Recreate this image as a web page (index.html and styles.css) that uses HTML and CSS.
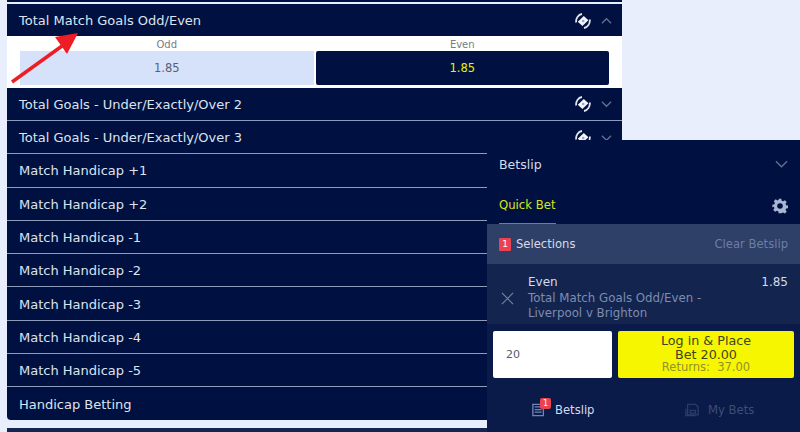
FILE: index.html
```html
<!DOCTYPE html>
<html lang="en">
<head>
  <meta charset="UTF-8">
  <title>Match markets</title>
  <link rel="stylesheet" href="styles.css">
</head>
<body>

  <div class="markets">
    <div class="market-top"></div>

    <div class="market">
      <span>Total Match Goals Odd/Even</span>
      <svg class="swap" viewBox="0 0 16 16"><use href="#swap-icon"/></svg>
      <svg class="chev" viewBox="0 0 12 8"><path d="M1 6.5 6 1.5 11 6.5"/></svg>
    </div>
    <div class="market-body">
      <div class="odd">
        <div class="odd-label">Odd</div>
        <div class="odd-btn">1.85</div>
      </div>
      <div class="odd">
        <div class="odd-label">Even</div>
        <div class="odd-btn selected">1.85</div>
      </div>
    </div>

    <div class="market">
      <span>Total Goals - Under/Exactly/Over 2</span>
      <svg class="swap" viewBox="0 0 16 16"><use href="#swap-icon"/></svg>
      <svg class="chev" viewBox="0 0 12 8"><path d="M1 1.5 6 6.5 11 1.5"/></svg>
    </div>
    <div class="market">
      <span>Total Goals - Under/Exactly/Over 3</span>
      <svg class="swap" viewBox="0 0 16 16"><use href="#swap-icon"/></svg>
      <svg class="chev" viewBox="0 0 12 8"><path d="M1 1.5 6 6.5 11 1.5"/></svg>
    </div>
    <div class="market"><span>Match Handicap +1</span></div>
    <div class="market"><span>Match Handicap +2</span></div>
    <div class="market"><span>Match Handicap -1</span></div>
    <div class="market"><span>Match Handicap -2</span></div>
    <div class="market"><span>Match Handicap -3</span></div>
    <div class="market"><span>Match Handicap -4</span></div>
    <div class="market"><span>Match Handicap -5</span></div>
    <div class="market last"><span>Handicap Betting</span></div>
    <div class="market-next"></div>
  </div>

  <!-- red arrow drawn over the page -->
  <svg class="arrow" viewBox="0 0 90 90" width="90" height="90">
    <path d="M12 82 62 46" stroke="#ee1c25" stroke-width="3.4" fill="none"/>
    <path d="M78 33 55 37 67 54Z" fill="#ee1c25"/>
  </svg>

  <div class="betslip">
    <div class="slip-head">
      <span>Betslip</span>
      <svg class="slip-chev" viewBox="0 0 14 8"><path d="M1 1 7 7 13 1"/></svg>
    </div>
    <div class="slip-tabs">
      <span class="tab-active">Quick Bet</span>
      <svg class="gear" viewBox="0 0 24 24">
        <path d="M10 1h4l.6 3.1 2 .8L19.300 3.200l2.800 2.800-1.700 2.700.8 2 3.100.600v4l-3.100.6-.8 2 1.700 2.700-2.800 2.800-2.700-1.700-2 .8L14 23h-4l-.6-3.100-2-.8-2.700 1.700-2.800-2.800 1.700-2.700-.8-2L.5 14v-4l3.100-.6.8-2L2.700 4.700 5.500 1.900l2.700 1.700 2-.8Z"/>
        <circle cx="12" cy="12" r="4.200" fill="#001141"/>
      </svg>
    </div>
    <div class="slip-sel">
      <span class="count">1</span>
      <span class="sel-title">Selections</span>
      <span class="clear">Clear Betslip</span>
    </div>
    <div class="slip-bet">
      <svg class="close" viewBox="0 0 14 14"><path d="M1 1 13 13M13 1 1 13"/></svg>
      <div class="bet-info">
        <div class="bet-top"><span>Even</span><span>1.85</span></div>
        <div class="bet-desc">Total Match Goals Odd/Even -<br>Liverpool v Brighton</div>
      </div>
    </div>
    <div class="slip-stake">
      <div class="stake-input">20</div>
      <div class="place">
        <div>Log in &amp; Place</div>
        <div>Bet 20.00</div>
        <div class="returns">Returns:&nbsp; 37.00</div>
      </div>
    </div>
    <div class="slip-foot">
      <div class="foot-item">
        <span class="foot-icon">
          <svg viewBox="0 0 16 15"><path d="M1 1h12v13H1ZM3 4h8M3 7h8M3 10h8" fill="none" stroke="#6f86b5" stroke-width="1.500"/></svg>
          <span class="foot-badge">1</span>
        </span>
        <span>Betslip</span>
      </div>
      <div class="foot-item off">
        <span class="foot-icon">
          <svg viewBox="0 0 16 15"><path d="M3 4V1h9l3 3v9H3ZM1 6v8h11M6 8h6v3H6Z" fill="none" stroke="#2b3c68" stroke-width="1.500"/></svg>
        </span>
        <span>My Bets</span>
      </div>
    </div>
  </div>

  <svg class="defs" width="0" height="0">
    <symbol id="swap-icon" viewBox="0 0 16 16">
      <path d="M2.800 8.800 8.800 3l4.600 4.200-6 5.800Z" fill="#f3f5fa"/>
      <circle cx="8.200" cy="8" r="1.300" fill="#9aa6c0"/>
      <path d="M1.200 9.500C.6 5.500 3.300 1.600 7 1M14.800 6.500c.5 4-2.100 7.800-5.800 8.500" fill="none" stroke="#dfe4ee" stroke-width="1.800"/>
    </symbol>
  </svg>

</body>
</html>
```

FILE: styles.css
```css
html, body {
  margin: 0;
  height: 432px;
  overflow: hidden;
}

body {
  position: relative;
  background-color: #e8eefc;
  font-family: 'DejaVu Sans', Verdana, sans-serif;
  font-size: 13px;
}

.markets {
  width: 615px;
  margin-left: 7px;
}

.market-top {
  height: 2px;
  background: #001141;
  margin-bottom: 2px;
}

.market {
  display: flex;
  align-items: center;
  box-sizing: border-box;
  height: 33.300px;
  padding: 1px 8px 0 12px;
  background: #001141;
  color: #dde3ee;
  border-bottom: 1.600px solid #8e9bba;
}

.market span {
  flex: 1;
}

.market.last {
  height: 33px;
  margin-bottom: 7.300px;
  border-bottom: none;
  border-radius: 0 0 4px 4px;
}

.market-next {
  height: 4px;
  background: #14264f;
}

.swap {
  width: 16px;
  height: 16px;
  margin-right: 10px;
}

.chev {
  width: 11px;
  height: 8px;
  margin-right: 2px;
}

.chev path {
  fill: none;
  stroke: #66738f;
  stroke-width: 1.300;
}

.market-body {
  display: flex;
  gap: 2px;
  height: 52px;
  margin-top: -1.600px;
  position: relative;
  padding: 0 13px;
  background: #ffffff;
}

.odd {
  flex: 1;
  display: flex;
  flex-direction: column;
}

.odd-label {
  height: 15px;
  line-height: 18px;
  text-align: center;
  font-size: 10px;
  color: #777c84;
}

.odd-btn {
  height: 34px;
  line-height: 34px;
  text-align: center;
  font-size: 11.500px;
  background: #d6e2fa;
  color: #555f75;
}

.odd-btn.selected {
  background: #001141;
  color: #e8f000;
  border-radius: 2px;
}

.arrow {
  position: absolute;
  left: 0;
  top: 0;
}

.betslip {
  position: absolute;
  left: 487px;
  right: 0;
  top: 140px;
  bottom: 0;
  display: flex;
  flex-direction: column;
  background: #001141;
  color: #d5dbe8;
}

.slip-head {
  display: flex;
  align-items: center;
  justify-content: space-between;
  height: 48px;
  padding: 0 12px;
  font-size: 12.500px;
}

.slip-chev {
  width: 13px;
  height: 8px;
}

.slip-chev path {
  fill: none;
  stroke: #66738f;
  stroke-width: 1.300;
}

.slip-tabs {
  display: flex;
  align-items: center;
  justify-content: space-between;
  height: 36px;
  padding: 0 12px;
  font-size: 11.700px;
}

.tab-active {
  color: #d8e41e;
  height: 36px;
  line-height: 35px;
  border-bottom: 1px solid #6f8a4a;
  box-sizing: border-box;
}

.gear {
  width: 16px;
  height: 16px;
  fill: #a9b6d2;
}

.slip-sel {
  display: flex;
  align-items: center;
  height: 40px;
  padding: 0 12px;
  background: #2e3f68;
  font-size: 11.600px;
}

.count {
  width: 12px;
  height: 13px;
  line-height: 13px;
  margin-right: 5px;
  text-align: center;
  font-size: 9px;
  background: #ea4250;
  color: #ffffff;
  border-radius: 1px;
}

.sel-title {
  flex: 1;
}

.clear {
  color: #6c7ea5;
}

.slip-bet {
  display: flex;
  align-items: center;
  box-sizing: border-box;
  height: 60px;
  padding: 7px 12px 0 14px;
  background: #13244f;
}

.close {
  width: 13px;
  height: 13px;
  margin-right: 14px;
  margin-top: 1px;
}

.close path {
  fill: none;
  stroke: #76859f;
  stroke-width: 1.200;
}

.bet-info {
  flex: 1;
}

.bet-top {
  display: flex;
  justify-content: space-between;
  font-size: 12px;
  line-height: 17px;
}

.bet-desc {
  font-size: 11.800px;
  line-height: 15.500px;
  color: #7c8db0;
}

.slip-stake {
  display: flex;
  gap: 6px;
  height: 54px;
  padding: 7px 6px 0;
  box-sizing: border-box;
  background: #0a1a49;
}

.stake-input {
  width: 119px;
  height: 47px;
  line-height: 47px;
  padding-left: 13px;
  box-sizing: border-box;
  background: #ffffff;
  color: #555c68;
  font-size: 11px;
  border-radius: 2px;
}

.place {
  flex: 1;
  height: 47px;
  padding-top: 3px;
  box-sizing: border-box;
  background: #f6f600;
  color: #3f4420;
  border-radius: 2px;
  text-align: center;
  font-size: 12.700px;
  line-height: 13.500px;
}

.returns {
  font-size: 11.500px;
  line-height: 13.500px;
  color: #90922c;
}

.slip-foot {
  flex: 1;
  display: flex;
  align-items: center;
  min-height: 0;
  background: #0a1a49;
  padding: 10px 0 0 45px;
  font-size: 11.600px;
}

.foot-item {
  flex: none;
  display: flex;
  align-items: center;
  gap: 9px;
  width: 153px;
}

.foot-item.off {
  width: 100px;
  color: #3d4d75;
}

.foot-icon {
  position: relative;
  display: block;
  width: 14px;
  height: 14px;
}

.foot-icon svg {
  display: block;
  width: 14px;
  height: 14px;
}

.foot-badge {
  position: absolute;
  left: 8px;
  top: -5px;
  width: 11px;
  height: 11px;
  line-height: 11px;
  text-align: center;
  font-size: 8px;
  color: #ffffff;
  background: #ea4250;
  border-radius: 2px;
}

.defs {
  position: absolute;
}
```
